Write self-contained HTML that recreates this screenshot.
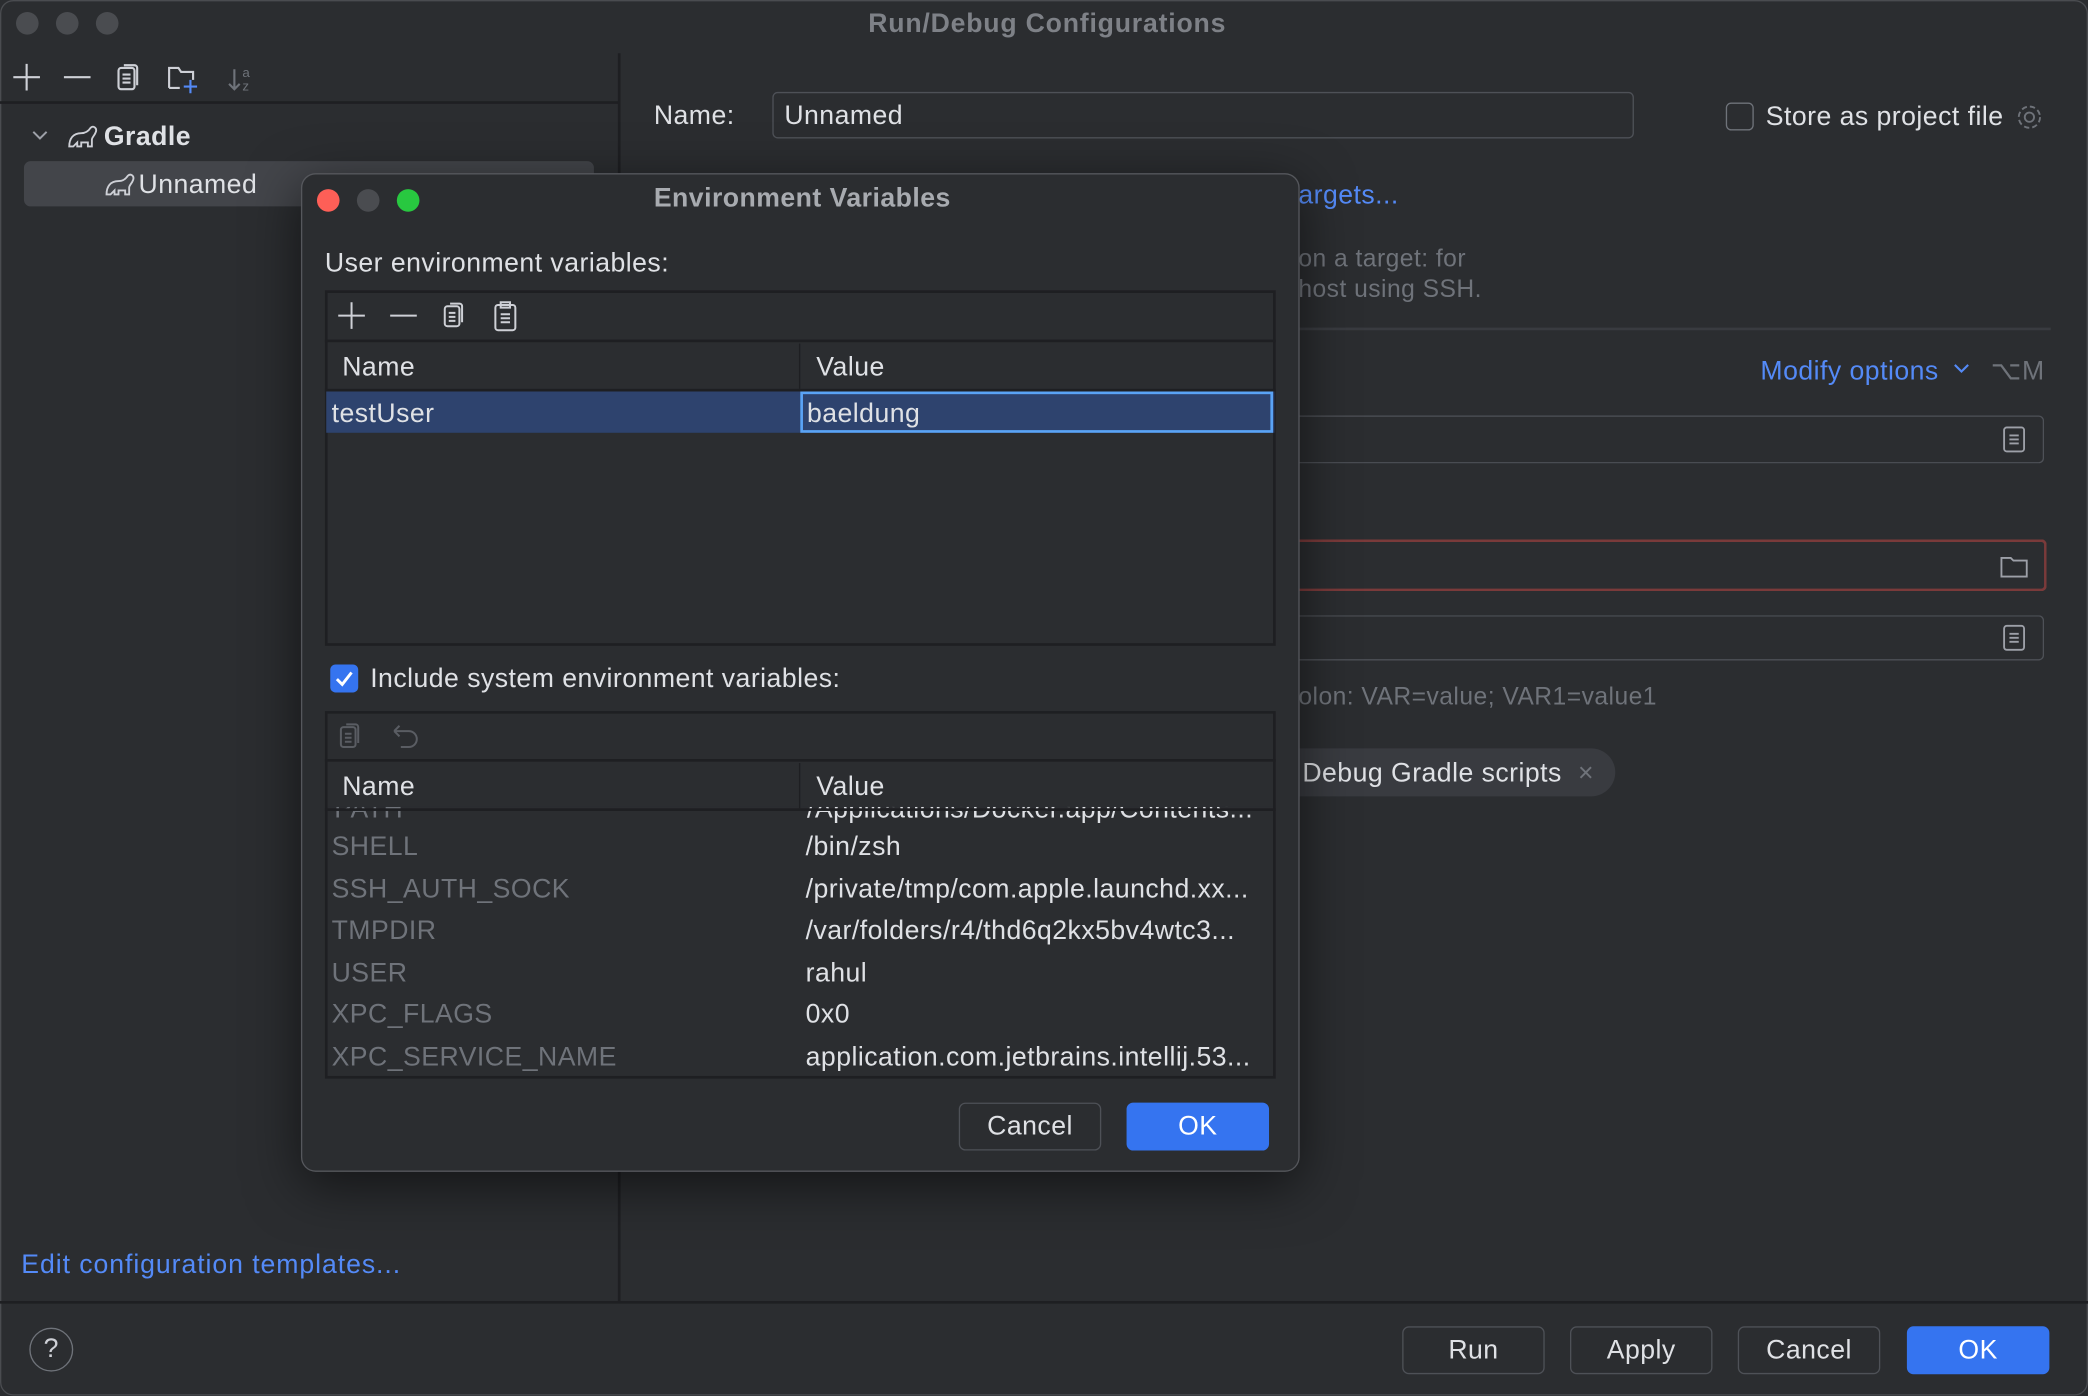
<!DOCTYPE html>
<html><head><meta charset="utf-8"><style>
*{box-sizing:border-box;margin:0;padding:0}
body{width:2088px;height:1396px;overflow:hidden;background:#2b2d30;font-family:"Liberation Sans",sans-serif;color:#dfe1e5}
#w{position:absolute;left:0;top:0;width:1568px;height:1048px;transform:scale(1.33163);transform-origin:0 0;background:#2b2d30;font-size:20px;letter-spacing:0.35px}
.a{position:absolute;white-space:nowrap}
.t{line-height:1}
.btn{position:absolute;height:36px;border:1px solid #4e5157;border-radius:5px;text-align:center;line-height:34px;font-size:20px;color:#dfe1e5;background:#2b2d30}
.blue{background:#3574f0;border-color:#3574f0;color:#fff}
.dot{position:absolute;width:17px;height:17px;border-radius:50%}
.inp{position:absolute;border:1px solid #4e5157;border-radius:4px}
.ln{position:absolute;background:#1e1f22}
.gray{color:#6f737a}
svg{position:absolute}
</style></head><body><div id="w">
<div style="position:absolute;inset:0;border:1px solid #4a4c50;border-radius:10px"></div>
<div class="dot" style="left:12px;top:9px;background:#4a4c50"></div>
<div class="dot" style="left:42px;top:9px;background:#4a4c50"></div>
<div class="dot" style="left:72px;top:9px;background:#4a4c50"></div>
<div class="a t" style="left:652px;top:8px;font-weight:bold;color:#7e8187;letter-spacing:0.6px">Run/Debug Configurations</div>

<svg style="left:8px;top:46px" width="190" height="26" fill="none" stroke="#ced0d6" stroke-width="1.6">
<path d="M2 12h20M12 2v20"/><path d="M40 12h20"/>
<rect x="81" y="5" width="12" height="16" rx="2"/><path d="M85 3h8a2 2 0 0 1 2 2v13"/><path d="M84 10h6M84 13h6M84 16h6"/>
<path d="M119 20V5h7l2 3h9v6"/><path d="M119 20h8" /><path d="M135 14v10M130 19h10" stroke="#548af7"/>
<path d="M168 6v15M164 17l4 4 4-4" stroke="#6f737a"/><text x="174" y="12" font-size="10" fill="#6f737a" stroke="none" font-family="Liberation Sans">a</text><text x="174" y="22" font-size="10" fill="#6f737a" stroke="none" font-family="Liberation Sans">z</text>
</svg>
<div class="ln" style="left:0;top:76px;width:465px;height:2px"></div>
<div class="ln" style="left:464px;top:40px;width:2px;height:938px"></div>
<svg style="left:22px;top:95px" width="16" height="14" fill="none" stroke="#9da0a8" stroke-width="1.5"><path d="M3 4l5 5 5-5"/></svg>
<svg style="left:50px;top:92px" width="24" height="20" fill="none" stroke="#ced0d6" stroke-width="1.4"><path d="M2 18c0-6 3-10 9-10 3 0 5-1 7-4 2-2 5 0 4 3-1 3-3 4-3 6v5h-3v-3h-5v3H8v-3l-3 3z"/></svg>
<div class="a t" style="left:78px;top:93px;font-weight:bold">Gradle</div>
<div style="position:absolute;left:18px;top:121px;width:428px;height:34px;background:#43454a;border-radius:5px"></div>
<svg style="left:78px;top:128px" width="24" height="20" fill="none" stroke="#ced0d6" stroke-width="1.4"><path d="M2 18c0-6 3-10 9-10 3 0 5-1 7-4 2-2 5 0 4 3-1 3-3 4-3 6v5h-3v-3h-5v3H8v-3l-3 3z"/></svg>
<div class="a t" style="left:104px;top:129px">Unnamed</div>
<div class="a t" style="left:16px;top:940px;color:#548af7;letter-spacing:0.7px">Edit configuration templates...</div>
<div class="ln" style="left:0;top:977px;width:1568px;height:2px"></div>
<div style="position:absolute;left:22px;top:997px;width:33px;height:33px;border:1.5px solid #6f737a;border-radius:50%;text-align:center;line-height:31px;color:#ced0d6;font-size:20px">?</div>
<div class="btn" style="left:1053px;top:996px;width:107px">Run</div>
<div class="btn" style="left:1179px;top:996px;width:107px">Apply</div>
<div class="btn" style="left:1305px;top:996px;width:107px">Cancel</div>
<div class="btn blue" style="left:1432px;top:996px;width:107px">OK</div>

<div class="a t" style="left:491px;top:77px">Name:</div>
<div class="inp" style="left:580px;top:69px;width:647px;height:35px"></div>
<div class="a t" style="left:589px;top:77px">Unnamed</div>
<div style="position:absolute;left:1296px;top:77px;width:21px;height:21px;border:1.5px solid #6f737a;border-radius:4px"></div>
<div class="a t" style="left:1326px;top:78px">Store as project file</div>
<svg style="left:1512px;top:76px" width="24" height="24" fill="none" stroke="#6f737a" stroke-width="1.4"><circle cx="12" cy="12" r="3.5"/><circle cx="12" cy="12" r="8" stroke-dasharray="4 2.3"/></svg>
<div class="a t" style="left:975px;top:137px;color:#548af7">argets...</div>
<div class="a t gray" style="left:975px;top:185px;font-size:18.5px">on a target: for</div>
<div class="a t gray" style="left:975px;top:208px;font-size:18.5px">host using SSH.</div>
<div class="ln" style="left:975px;top:246px;width:565px;height:2px;background:#393b40"></div>
<div class="a t" style="left:1322px;top:269px;color:#548af7">Modify options</div>
<svg style="left:1466px;top:270px" width="14" height="14" fill="none" stroke="#548af7" stroke-width="1.6"><path d="M2 4l5 5 5-5"/></svg>
<div class="a t gray" style="left:1495px;top:269px">⌥M</div>
<div class="inp" style="left:940px;top:312px;width:595px;height:36px;border-left:none"></div>
<svg style="left:1503px;top:320px" width="20" height="20" fill="none" stroke="#9da0a8" stroke-width="1.4"><rect x="2" y="1" width="15" height="18" rx="2"/><path d="M6 7h7M6 10h7M6 13h7"/></svg>
<div class="inp" style="left:940px;top:405px;width:597px;height:39px;border:2px solid #7a3a3a;border-left:none"></div>
<svg style="left:1501px;top:415px" width="24" height="20" fill="none" stroke="#9da0a8" stroke-width="1.4"><path d="M2 4h7l2 2h10v12H2z"/></svg>
<div class="inp" style="left:940px;top:462px;width:595px;height:34px;border-left:none"></div>
<svg style="left:1503px;top:469px" width="20" height="20" fill="none" stroke="#9da0a8" stroke-width="1.4"><rect x="2" y="1" width="15" height="18" rx="2"/><path d="M6 7h7M6 10h7M6 13h7"/></svg>
<div class="a t gray" style="left:975px;top:514px;font-size:18.5px">olon: VAR=value; VAR1=value1</div>
<div style="position:absolute;left:940px;top:562px;width:273px;height:36px;background:#393b40;border-radius:18px"></div>
<div class="a t" style="left:978px;top:571px">Debug Gradle scripts</div>
<div class="a t gray" style="left:1185px;top:571px">×</div>

<div style="position:absolute;left:226px;top:130px;width:750px;height:750px;background:#2b2d30;border:1px solid #55575c;border-radius:11px;box-shadow:0 10px 40px rgba(0,0,0,.55)"></div>
<div class="dot" style="left:238px;top:142px;background:#fe5f57"></div>
<div class="dot" style="left:268px;top:142px;background:#4a4c50"></div>
<div class="dot" style="left:298px;top:142px;background:#28c840"></div>
<div class="a t" style="left:491px;top:139px;font-weight:bold;color:#a8abb0">Environment Variables</div>
<div class="a t" style="left:244px;top:188px">User environment variables:</div>
<div style="position:absolute;left:244px;top:218px;width:714px;height:267px;border:2px solid #1e1f22"></div>
<div class="ln" style="left:244px;top:255px;width:714px;height:2px"></div>
<div class="ln" style="left:244px;top:292px;width:714px;height:2px"></div>
<div class="ln" style="left:600px;top:258px;width:1px;height:34px;background:#1e1f22"></div>
<svg style="left:252px;top:226px" width="150" height="24" fill="none" stroke="#ced0d6" stroke-width="1.5">
<path d="M2 11h20M12 1v20"/><path d="M41 11h20"/>
<rect x="82" y="4" width="11" height="15" rx="2"/><path d="M86 2h7a2 2 0 0 1 2 2v12"/><path d="M85 9h5M85 12h5M85 15h5"/>
<rect x="120" y="3" width="15" height="19" rx="2"/><path d="M124 1h7v4h-7z"/><path d="M124 10h7M124 13h7M124 16h7"/>
</svg>
<div class="a t" style="left:257px;top:266px">Name</div>
<div class="a t" style="left:613px;top:266px">Value</div>
<div style="position:absolute;left:245px;top:294px;width:712px;height:31px;background:#2e436e"></div>
<div style="position:absolute;left:601px;top:294px;width:355px;height:31px;border:2px solid #5aa3f5"></div>
<div class="a t" style="left:249px;top:301px">testUser</div>
<div class="a t" style="left:606px;top:301px">baeldung</div>

<div style="position:absolute;left:248px;top:499px;width:21px;height:21px;background:#3574f0;border-radius:4px"></div>
<svg style="left:248px;top:499px" width="21" height="21" fill="none" stroke="#fff" stroke-width="2.2"><path d="M5 11l4 4 7-9"/></svg>
<div class="a t" style="left:278px;top:500px">Include system environment variables:</div>

<div style="position:absolute;left:244px;top:534px;width:714px;height:276px;border:2px solid #1e1f22;overflow:hidden">
<div class="a t" style="left:360px;top:62px;color:#dfe1e5">/Applications/Docker.app/Contents...</div>
<div class="a t gray" style="left:5px;top:62px">PATH</div>
</div>
<div style="position:absolute;left:246px;top:536px;width:710px;height:70px;background:#2b2d30"></div>
<div class="ln" style="left:244px;top:570px;width:714px;height:2px"></div>
<div class="ln" style="left:244px;top:607px;width:714px;height:2px"></div>
<div class="ln" style="left:600px;top:573px;width:1px;height:34px"></div>
<svg style="left:254px;top:541px" width="70" height="24" fill="none" stroke="#5a5d63" stroke-width="1.5">
<rect x="2" y="5" width="11" height="15" rx="2"/><path d="M6 3h7a2 2 0 0 1 2 2v12"/><path d="M5 10h5M5 13h5M5 16h5"/>
<path d="M42 8h11a6 6 0 0 1 0 12h-6M42 8l4-4M42 8l4 4"/>
</svg>
<div class="a t" style="left:257px;top:581px">Name</div>
<div class="a t" style="left:613px;top:581px">Value</div>
<div class="a t gray" style="left:249px;top:626px">SHELL</div><div class="a t" style="left:605px;top:626px">/bin/zsh</div>
<div class="a t gray" style="left:249px;top:658px">SSH_AUTH_SOCK</div><div class="a t" style="left:605px;top:658px">/private/tmp/com.apple.launchd.xx...</div>
<div class="a t gray" style="left:249px;top:689px">TMPDIR</div><div class="a t" style="left:605px;top:689px">/var/folders/r4/thd6q2kx5bv4wtc3...</div>
<div class="a t gray" style="left:249px;top:721px">USER</div><div class="a t" style="left:605px;top:721px">rahul</div>
<div class="a t gray" style="left:249px;top:752px">XPC_FLAGS</div><div class="a t" style="left:605px;top:752px">0x0</div>
<div class="a t gray" style="left:249px;top:784px">XPC_SERVICE_NAME</div><div class="a t" style="left:605px;top:784px">application.com.jetbrains.intellij.53...</div>

<div class="btn" style="left:720px;top:828px;width:107px">Cancel</div>
<div class="btn blue" style="left:846px;top:828px;width:107px">OK</div>
</div></body></html>
